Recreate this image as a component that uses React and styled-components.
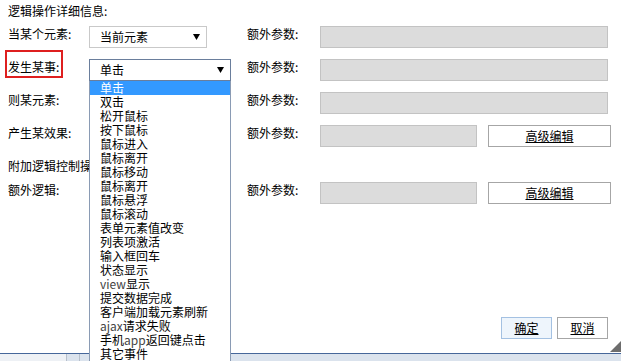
import React from "react";
import styled, { createGlobalStyle } from "styled-components";

const GlobalStyle = createGlobalStyle`
  html, body { margin: 0; padding: 0; background: #fff; }
  body {
    font-family: "Noto Sans CJK SC", "Liberation Sans", sans-serif;
    font-size: 12px;
    color: #000;
  }
`;

const Page = styled.div`
  position: relative;
  width: 621px;
  height: 361px;
  display: flex;
  flex-direction: column;
  overflow: hidden;
`;

const Main = styled.div`
  flex: 1;
  display: flex;
  flex-direction: column;
  padding: 4px 0 0 8px;
`;

const Title = styled.div`
  line-height: 14px;
  height: 14px;
  margin-bottom: 8px;
`;

const Form = styled.div`
  display: flex;
  flex-direction: column;
  gap: 11px;
`;

const Row = styled.div`
  display: grid;
  grid-template-columns: 81px 158px 73px 1fr;
  align-items: start;
  height: ${(p) => (p.$short ? "13px" : "22px")};
`;

const Label = styled.div`
  position: relative;
  line-height: 14px;
  padding-top: 1px;
  white-space: nowrap;
`;

const Highlight = styled.span`
  position: absolute;
  left: -3px;
  top: -9px;
  width: 58px;
  height: 28px;
  box-sizing: border-box;
  border: 2px solid #de1f1f;
  pointer-events: none;
`;

const FieldCell = styled.div`
  position: relative;
`;

const Select = styled.div`
  box-sizing: border-box;
  width: ${(p) => p.$width}px;
  height: 22px;
  display: flex;
  align-items: center;
  justify-content: space-between;
  padding: 0 6px 0 10px;
  background: #fff;
  border: 1px solid ${(p) => (p.$open ? "#6a7e9c" : "#c9c9c9")};
  line-height: 14px;
`;

const Arrow = styled.svg`
  width: 7px;
  height: 6px;
  display: block;
`;

const DropList = styled.ul`
  position: absolute;
  z-index: 10;
  left: 0;
  top: 22px;
  box-sizing: border-box;
  width: 142px;
  margin: 0;
  padding: 0;
  list-style: none;
  background: #fff;
  border-left: 1px solid #8a9bb4;
  border-right: 1px solid #8a9bb4;
`;

const DropItem = styled.li`
  height: 14px;
  line-height: 14px;
  padding-left: 10px;
  white-space: nowrap;
  background: ${(p) => (p.$active ? "#3399ff" : "transparent")};
  color: ${(p) => (p.$active ? "#fff" : "#000")};
`;

const Latin = styled.span`
  color: #444;
`;

const ParamLabel = styled.div`
  line-height: 14px;
  padding-top: 1px;
  white-space: nowrap;
`;

const Fields = styled.div`
  display: flex;
  gap: 11px;
`;

const Input = styled.div`
  box-sizing: border-box;
  width: ${(p) => (p.$narrow ? 157 : 288)}px;
  height: 22px;
  background: #dcdcdc;
  border: 1px solid #c3c3c3;
`;

const Button = styled.button`
  box-sizing: border-box;
  width: ${(p) => p.$width}px;
  height: 22px;
  padding: 0;
  font-family: inherit;
  font-size: 12px;
  line-height: 14px;
  color: #000;
  text-decoration: underline;
  background: ${(p) => (p.$primary ? "#eef5fc" : "#fff")};
  border: 1px solid ${(p) => (p.$primary ? "#a4c1e2" : "#a6a6a6")};
  border-radius: 0;
`;

const ButtonBar = styled.div`
  margin-top: auto;
  margin-bottom: 14px;
  padding-right: 13px;
  display: flex;
  justify-content: flex-end;
  gap: 5px;
`;

const Grip = styled.span`
  position: absolute;
  right: 0;
  bottom: 9px;
  width: 0;
  height: 0;
  border-left: 11px solid transparent;
  border-bottom: 11px solid #6d6d6d;
`;

const Footer = styled.div`
  height: 7px;
  border-top: 1px solid #46679a;
  background: #dbe3ed;
  display: flex;
`;

const FooterTab = styled.div`
  width: ${(p) => p.$width}px;
  background: ${(p) => p.$bg};
  border-right: 1px solid #b7c0cc;
`;

const events = [
  "单击", "双击", "松开鼠标", "按下鼠标", "鼠标进入", "鼠标离开", "鼠标移动",
  "鼠标离开", "鼠标悬浮", "鼠标滚动", "表单元素值改变", "列表项激活", "输入框回车",
  "状态显示", ["view", "显示"], "提交数据完成", "客户端加载元素刷新",
  ["ajax", "请求失败"], ["手机", "app", "返回键点击"], "其它事件",
];

const renderItem = (item) => {
  if (!Array.isArray(item)) return item;
  return item.map((part, i) =>
    /[a-z]/.test(part) ? <Latin key={i}>{part}</Latin> : <React.Fragment key={i}>{part}</React.Fragment>
  );
};

const DownArrow = () => (
  <Arrow viewBox="0 0 7 6">
    <polygon points="0,0 7,0 3.5,6" fill="#000" />
  </Arrow>
);

export default function App() {
  return (
    <>
      <GlobalStyle />
      <Page>
        <Main>
          <Title>逻辑操作详细信息:</Title>
          <Form>
            <Row>
              <Label>当某个元素:</Label>
              <FieldCell>
                <Select $width={118}>
                  <span>当前元素</span>
                  <DownArrow />
                </Select>
              </FieldCell>
              <ParamLabel>额外参数:</ParamLabel>
              <Fields><Input /></Fields>
            </Row>
            <Row>
              <Label>
                发生某事:
                <Highlight />
              </Label>
              <FieldCell>
                <Select $width={142} $open>
                  <span>单击</span>
                  <DownArrow />
                </Select>
                <DropList>
                  {events.map((e, i) => (
                    <DropItem key={i} $active={i === 0}>{renderItem(e)}</DropItem>
                  ))}
                </DropList>
              </FieldCell>
              <ParamLabel>额外参数:</ParamLabel>
              <Fields><Input /></Fields>
            </Row>
            <Row>
              <Label>则某元素:</Label>
              <FieldCell />
              <ParamLabel>额外参数:</ParamLabel>
              <Fields><Input /></Fields>
            </Row>
            <Row>
              <Label>产生某效果:</Label>
              <FieldCell />
              <ParamLabel>额外参数:</ParamLabel>
              <Fields>
                <Input $narrow />
                <Button $width={123}>高级编辑</Button>
              </Fields>
            </Row>
            <Row $short>
              <Label>附加逻辑控制操作:</Label>
            </Row>
            <Row>
              <Label>额外逻辑:</Label>
              <FieldCell />
              <ParamLabel>额外参数:</ParamLabel>
              <Fields>
                <Input $narrow />
                <Button $width={123}>高级编辑</Button>
              </Fields>
            </Row>
          </Form>
          <ButtonBar>
            <Button $width={51} $primary>确定</Button>
            <Button $width={51}>取消</Button>
          </ButtonBar>
        </Main>
        <Grip />
        <Footer>
          <FooterTab $width={66} $bg="#eef1f5" />
          <FooterTab $width={12} $bg="#dbe3ed" />
        </Footer>
      </Page>
    </>
  );
}
